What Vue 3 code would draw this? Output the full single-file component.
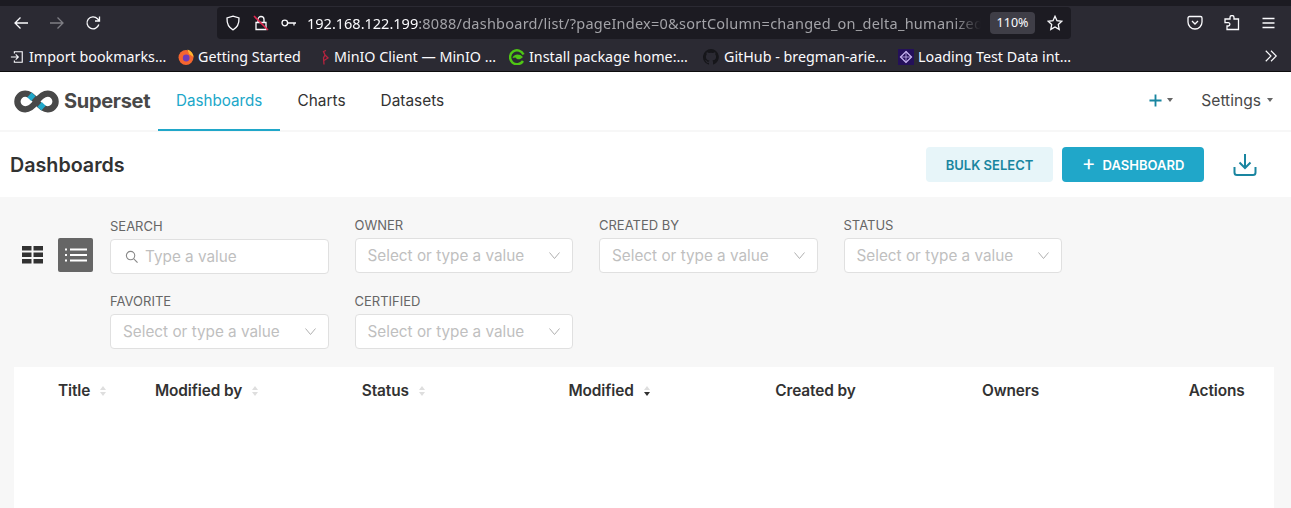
<template>
  <div class="page">
    <div class="browser">
      <div class="toolbar">
        <div class="nav-btns">
          <svg class="ic" viewBox="0 0 16 16"><path d="M15 8H2M7.5 2.500 2 8l5.500 5.500" /></svg>
          <svg class="ic off" viewBox="0 0 16 16"><path d="M1 8h13M8.500 2.500 14 8l-5.500 5.500" /></svg>
          <svg class="ic" viewBox="0 0 16 16"><path d="M13.800 9.500A6 6 0 1 1 12.500 3.800L14.500 6M14.500 1.500V6H10" /></svg>
        </div>
        <div class="urlbar">
          <svg class="ic shield" viewBox="0 0 16 16"><path d="M8 1.200 14 3c.2 5.500-1.500 9.500-6 11.800C3.500 12.500 1.800 8.500 2 3Z" /></svg>
          <svg class="ic lock" viewBox="0 0 16 16">
            <path d="M5 7V4.500a3 3 0 0 1 6 0V7M3 7.500h10v7H3Z" />
            <path class="slash" d="M1 1l14 14" />
          </svg>
          <svg class="ic key" viewBox="0 0 16 16"><circle cx="3.800" cy="8" r="2.800" /><path d="M6.600 8H15M13 8v2.500" /></svg>
          <div class="url"><span class="host">192.168.122.199</span><span class="path">:8088/dashboard/list/?pageIndex=0&amp;sortColumn=changed_on_delta_humanized</span></div>
          <div class="zoom">110%</div>
          <svg class="ic star" viewBox="0 0 16 16"><path d="m8 1.300 2 4.400 4.800.6-3.500 3.300.9 4.800L8 12l-4.200 2.400.9-4.800L1.200 6.300 6 5.700Z" /></svg>
        </div>
        <div class="tool-right">
          <svg class="ic" viewBox="0 0 16 16"><path d="M2.500 1.500h11a1.500 1.500 0 0 1 1.500 1.500v4a7 7 0 0 1-14 0V3a1.500 1.500 0 0 1 1.500-1.500ZM5 6l3 3 3-3" /></svg>
          <svg class="ic" viewBox="0 0 16 16"><path d="M6 2.500a2 2 0 0 1 4 0V4h4.500v10.500H3V11h1.200a1.700 1.700 0 0 0 0-3.400H1V4h5Z" /></svg>
          <svg class="ic" viewBox="0 0 16 16"><path d="M1.500 3.500h12M1.500 8h12M1.500 12.500h12" /></svg>
        </div>
      </div>
      <div class="bookmarks">
        <div class="bm first">
          <svg class="ic small" viewBox="0 0 16 16"><path d="M5 4V2h9v12H5v-2M1 8h8M6.500 5 9.500 8l-3 3" /></svg>
          <span>Import bookmarks…</span>
        </div>
        <div class="bm ff">
          <svg class="fav" viewBox="0 0 16 16">
            <circle cx="8" cy="8.500" r="7.500" fill="#f5652f" />
            <path d="M9.500.5c3 .8 5.800 3.800 6 7.500L11 5Z" fill="#ffb52e" />
            <circle cx="8.200" cy="9" r="3.400" fill="#6f3bb8" />
          </svg>
          <span>Getting Started</span>
        </div>
        <div class="bm minio">
          <svg class="fav" viewBox="0 0 16 16">
            <path d="M10 1.500 7.500 2.500 9 6 7.500 9l.5 6.500M9 6l3 3-4 2.500" fill="none" stroke="#b5243f" stroke-width="1.300" />
          </svg>
          <span>MinIO Client — MinIO …</span>
        </div>
        <div class="bm suse">
          <svg class="fav" viewBox="0 0 16 16">
            <path d="M14 12A7 7 0 1 1 14.500 5.500" fill="none" stroke="#4fc615" stroke-width="2.400" />
            <path d="M3.500 9c1-4 7-5 10.500-1-3 3-6 3-7.500.5Z" fill="#4fc615" />
          </svg>
          <span>Install package home:…</span>
        </div>
        <div class="bm gh">
          <svg class="fav" viewBox="0 0 16 16"><path fill="#16161a" d="M8 0a8 8 0 0 0-2.500 15.600c.4.1.5-.2.5-.4v-1.400c-2.200.5-2.700-1-2.700-1-.4-.9-.9-1.200-.9-1.200-.7-.5.100-.5.100-.5.800.1 1.200.8 1.200.8.700 1.200 1.900.9 2.300.7.100-.5.300-.9.500-1.100-1.800-.2-3.600-.9-3.600-4 0-.9.300-1.600.8-2.100-.1-.2-.4-1 .1-2.100 0 0 .7-.2 2.200.8a7.600 7.600 0 0 1 4 0c1.500-1 2.200-.8 2.200-.8.400 1.100.2 1.900.1 2.100.5.600.8 1.300.8 2.100 0 3.100-1.900 3.700-3.700 3.900.3.300.6.800.6 1.500v2.200c0 .2.100.5.600.4A8 8 0 0 0 8 0Z" /></svg>
          <span>GitHub - bregman-arie…</span>
        </div>
        <div class="bm loading">
          <svg class="fav" viewBox="0 0 16 16">
            <rect width="16" height="16" fill="#24105a" />
            <path d="M8 2.500 13.500 8 8 13.500 2.500 8Z" fill="none" stroke="#c9b6f2" stroke-width="1.200" />
            <path d="M8 2.500v11M2.500 8h11" stroke="#c9b6f2" stroke-width=".8" />
          </svg>
          <span>Loading Test Data int…</span>
        </div>
        <svg class="ic small more" viewBox="0 0 16 16"><path d="m2 2 6 6-6 6M8 2l6 6-6 6" /></svg>
      </div>
    </div>

    <header class="topnav">
      <div class="brand">
        <svg class="logo" viewBox="0 0 46 23">
          <path class="loop" d="M23 11.500C19 6 16 3.500 11.500 3.500a8 8 0 0 0 0 16c4.500 0 7.500-2.500 11.500-8S30 3.500 34.500 3.500a8 8 0 0 1 0 16C30 19.500 27 17 23 11.500Z" />
          <path class="accent" d="M15.800 4.800 19.800 8.500M26.200 14.500 30.200 18.200" />
        </svg>
        <span class="brand-name">Superset</span>
      </div>
      <nav class="menu">
        <a class="menu-item active">Dashboards</a>
        <a class="menu-item">Charts</a>
        <a class="menu-item">Datasets</a>
      </nav>
      <div class="nav-right">
        <div class="plus">
          <svg viewBox="0 0 14 14"><path d="M7 .5v13M.5 7h13" /></svg>
          <i class="caret"></i>
        </div>
        <div class="settings">Settings<i class="caret"></i></div>
      </div>
    </header>

    <section class="titlebar">
      <h1>Dashboards</h1>
      <div class="actions">
        <button class="btn light">BULK SELECT</button>
        <button class="btn primary"><span class="btn-plus">+</span>DASHBOARD</button>
        <svg class="download" viewBox="0 0 24 24"><path d="M12 1v14M6.500 9.500 12 15l5.500-5.500M1.500 14v5.500a2.500 2.500 0 0 0 2.500 2.500h16a2.500 2.500 0 0 0 2.500-2.500V14" /></svg>
      </div>
    </section>

    <main class="content">
      <div class="filters">
        <div class="view-toggle">
          <div class="view-btn">
            <svg viewBox="0 0 21 18"><path d="M0 0h9.500v4.500H0ZM11.500 0H21v4.500h-9.500ZM0 6.500h9.500v4.500H0ZM11.500 6.500H21v4.500h-9.500ZM0 13h9.500v4.500H0ZM11.500 13H21v4.500h-9.500Z" /></svg>
          </div>
          <div class="view-btn on">
            <svg viewBox="0 0 22 14"><path d="M5 .5h17v2H5ZM5 6h17v2H5ZM5 11.500h17v2H5ZM0 .5h2v2H0ZM0 6h2v2H0ZM0 11.500h2v2H0Z" /></svg>
          </div>
        </div>
        <div class="filter-grid">
          <div v-for="f in filters" :key="f.label" class="filter" :class="{ search: f.search }">
            <label>{{ f.label }}</label>
            <div class="field">
              <svg v-if="f.search" class="mag" viewBox="0 0 14 14"><circle cx="6" cy="6" r="4.500" /><path d="m9.500 9.500 4 4" /></svg>
              <span>{{ f.search ? 'Type a value' : 'Select or type a value' }}</span>
              <svg v-if="!f.search" class="chev" viewBox="0 0 11 7"><path d="m.5.500 5 6 5-6" /></svg>
            </div>
          </div>
        </div>
      </div>
      <div class="table">
        <div v-for="c in columns" :key="c.name" class="th">
          {{ c.name }}
          <span v-if="c.sort" class="sort" :class="{ desc: c.desc }"><i></i><i></i></span>
        </div>
      </div>
    </main>
  </div>
</template>

<script setup>
const filters = [
  { label: 'SEARCH', search: true },
  { label: 'OWNER' },
  { label: 'CREATED BY' },
  { label: 'STATUS' },
  { label: 'FAVORITE' },
  { label: 'CERTIFIED' },
]

const columns = [
  { name: 'Title', sort: true },
  { name: 'Modified by', sort: true },
  { name: 'Status', sort: true },
  { name: 'Modified', sort: true, desc: true },
  { name: 'Created by' },
  { name: 'Owners' },
  { name: 'Actions' },
]
</script>

<style>
html, body { margin: 0; background: #fff; overflow: hidden; }
</style>

<style scoped>
.page {
  width: 1291px;
  height: 508px;
  overflow: hidden;
  font-family: Inter, "Liberation Sans", sans-serif;
  color: #323232;
}

/* browser chrome */
.browser {
  background: #2b2a33;
  border-top: 6px solid #1c1b22;
  border-bottom: 1px solid #0c0c0d;
  height: 65px;
  font-family: "Noto Sans", "Open Sans", sans-serif;
  color: #fbfbfe;
}
.toolbar {
  display: flex;
  align-items: center;
  height: 33px;
}
.ic {
  width: 16px;
  height: 16px;
  fill: none;
  stroke: #fbfbfe;
  stroke-width: 1.300;
  flex: none;
}
.ic.off { opacity: .4; }
.nav-btns {
  display: flex;
  gap: 20px;
  width: 217px;
  padding-left: 13px;
  box-sizing: border-box;
}
.urlbar {
  width: 854px;
  height: 32px;
  background: #1c1b22;
  border-radius: 4px;
  display: flex;
  align-items: center;
  padding-left: 8px;
  box-sizing: border-box;
  position: relative;
}
.shield { margin-right: 12px; }
.lock { margin-right: 12px; }
.lock .slash { stroke: #e22850; stroke-width: 1.600; }
.key { margin-right: 10px; }
.url {
  width: 674px;
  white-space: nowrap;
  overflow: hidden;
  font-size: 14.500px;
  color: #a3a3a8;
  -webkit-mask-image: linear-gradient(90deg, #000 96%, transparent);
  mask-image: linear-gradient(90deg, #000 96%, transparent);
}
.host { color: #fbfbfe; }
.path { letter-spacing: .25px; }
.zoom {
  width: 45px;
  height: 22px;
  margin-left: 9px;
  background: #3f3e47;
  border-radius: 4px;
  font-size: 12.500px;
  line-height: 22px;
  text-align: center;
}
.star { margin-left: 12px; }
.tool-right {
  display: flex;
  gap: 21px;
  margin-left: 116px;
}
.bookmarks {
  display: flex;
  align-items: center;
  height: 31px;
  padding-top: 4px;
  box-sizing: border-box;
  position: relative;
  font-size: 14.300px;
  white-space: nowrap;
}
.bm {
  display: flex;
  align-items: center;
  gap: 5px;
  flex: none;
}
.ic.small { width: 14px; height: 14px; }
.fav { width: 16px; height: 16px; flex: none; }
.bm.first { width: 178px; padding-left: 10px; box-sizing: border-box; gap: 5px; }
.bm.ff { width: 138px; gap: 4px; }
.bm.minio { width: 193px; gap: 2px; }
.bm.suse { width: 194px; gap: 4px; }
.bm.gh { width: 195px; gap: 5px; }
.bm.loading { gap: 4px; }
.more { position: absolute; right: 13px; top: 10px; }

/* superset nav */
.topnav {
  display: flex;
  height: 58px;
  border-bottom: 2px solid #f7f7f7;
  background: #fff;
  position: relative;
}
.brand {
  width: 158px;
  display: flex;
  align-items: center;
  padding-left: 14px;
  box-sizing: border-box;
  gap: 5px;
}
.logo { width: 45px; height: 23px; flex: none; }
.logo path { fill: none; }
.logo .loop { stroke: #484848; stroke-width: 6.500; }
.logo .accent { stroke: #20a7c9; stroke-width: 6.500; }
.brand-name {
  font-size: 20px;
  font-weight: 700;
  color: #484848;
  letter-spacing: -.3px;
}
.menu {
  display: flex;
}
.menu-item {
  font-size: 15.400px;
  line-height: 57px;
  padding: 0 18px;
  height: 59px;
  box-sizing: border-box;
  color: #323232;
}
.menu-item.active {
  color: #20a7c9;
  border-bottom: 2px solid #20a7c9;
  width: 122px;
  font-size: 15.200px;
}
.menu-item + .menu-item { padding: 0 17.500px; }
.nav-right {
  margin-left: auto;
  display: flex;
  align-items: center;
  padding: 0 18px 2px 0;
  font-size: 15.600px;
  color: #484848;
}
.plus {
  display: flex;
  align-items: center;
  margin-right: 28px;
}
.plus svg {
  width: 13px;
  height: 13px;
  fill: none;
  stroke: #1985a0;
  stroke-width: 2;
}
.caret {
  display: inline-block;
  width: 0;
  height: 0;
  margin-left: 5px;
  border-left: 3px solid transparent;
  border-right: 3px solid transparent;
  border-top: 4px solid #666;
}
.settings { display: flex; align-items: center; }
.settings .caret { margin-left: 6px; }

.titlebar {
  display: flex;
  align-items: center;
  justify-content: space-between;
  height: 65px;
  padding: 0 34px 0 10px;
  box-sizing: border-box;
}
h1 {
  margin: 0;
  font-size: 19.700px;
  font-weight: 600;
  color: #323232;
}
.actions {
  display: flex;
  align-items: center;
}
.btn {
  height: 35px;
  border: 0;
  border-radius: 4px;
  font-family: inherit;
  font-size: 13px;
  font-weight: 600;
  padding: 0;
}
.btn.light {
  width: 127px;
  background: #e7f5f9;
  color: #1985a0;
}
.btn.primary {
  width: 142px;
  margin-left: 9px;
  background: #20a7c9;
  color: #fff;
  display: flex;
  align-items: center;
  justify-content: center;
}
.btn-plus {
  font-size: 21px;
  font-weight: 400;
  line-height: 20px;
  margin-right: 7px;
  margin-top: -3px;
}
.download {
  width: 24px;
  height: 24px;
  margin-left: 29px;
  fill: none;
  stroke: #1985a0;
  stroke-width: 2;
}

/* filters */
.content {
  background: #f7f7f7;
  height: 311px;
  padding: 0 17px 0 14px;
  box-sizing: border-box;
}
.filters {
  display: flex;
  height: 170px;
}
.view-toggle {
  display: flex;
  align-items: center;
  align-self: flex-start;
  margin-top: 41px;
  width: 96px;
  flex: none;
  padding-left: 8px;
  box-sizing: border-box;
  gap: 15px;
}
.view-btn {
  width: 21px;
  height: 34px;
  display: flex;
  align-items: center;
  justify-content: center;
}
.view-btn svg { width: 21px; height: 18px; fill: #323232; }
.view-btn.on {
  width: 35px;
  background: #666;
  border-radius: 2px;
}
.view-btn.on svg { width: 22px; height: 14px; fill: #fff; }
.filter-grid {
  display: grid;
  grid-template-columns: repeat(4, 218.500px);
  column-gap: 26px;
  align-content: start;
  padding-top: 20px;
}
.filter {
  height: 75px;
}
.filter label {
  display: block;
  font-size: 13px;
  line-height: 19px;
  color: #666;
}
.filter:not(.search) label { margin-top: -1px; }
.filter:nth-child(n + 5) label { margin-top: 0; line-height: 18px; }
.field {
  height: 35px;
  margin-top: 3px;
  border: 1px solid #e0e0e0;
  border-radius: 4px;
  background: #fff;
  display: flex;
  align-items: center;
  padding: 0 12px;
  box-sizing: border-box;
  font-size: 15.300px;
  color: #bfbfbf;
  position: relative;
}
.filter:nth-child(n + 5) .field { margin-top: 4px; }
.filter.search .field { margin-top: 3px; padding-left: 14px; gap: 7px; }
.mag {
  width: 13px;
  height: 13px;
  fill: none;
  stroke: #888;
  stroke-width: 1.200;
}
.chev {
  position: absolute;
  right: 12px;
  top: 13px;
  width: 11px;
  height: 7px;
  fill: none;
  stroke: #b0b0b0;
  stroke-width: 1;
}

/* table */
.table {
  background: #fff;
  height: 141px;
  display: grid;
  grid-template-columns: 97px repeat(5, 206.750px) auto;
  padding: 14px 0 0 44px;
  box-sizing: border-box;
  align-content: start;
}
.th {
  font-size: 15.400px;
  font-weight: 600;
  line-height: 19px;
  color: #323232;
  display: flex;
  align-items: center;
  white-space: nowrap;
  letter-spacing: -.1px;
}
.sort {
  display: inline-flex;
  flex-direction: column;
  gap: 2px;
  margin-left: 10px;
  margin-top: 1px;
}
.sort i {
  width: 0;
  height: 0;
  border-left: 3px solid transparent;
  border-right: 3px solid transparent;
  border-bottom: 4px solid #dedede;
}
.sort i + i {
  border-bottom: 0;
  border-top: 4px solid #dedede;
}
.sort.desc i + i { border-top-color: #323232; }
</style>
